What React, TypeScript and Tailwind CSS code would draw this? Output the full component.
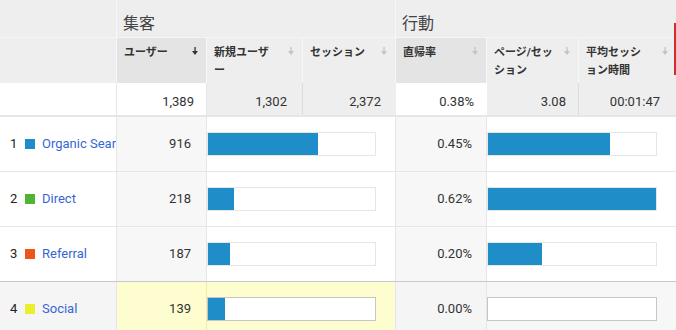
import React from 'react';

const cols = 'grid grid-cols-[117px_90px_96px_93px_91px_92px_97px]';

type Row = {
  rank: number;
  name: string;
  swatch: string;
  users: number;
  bounce: string;
  bounceVal: number;
};

const rows: Row[] = [
  { rank: 1, name: 'Organic Search', swatch: 'bg-[#1f8ec8]', users: 916, bounce: '0.45%', bounceVal: 0.45 },
  { rank: 2, name: 'Direct', swatch: 'bg-[#50b432]', users: 218, bounce: '0.62%', bounceVal: 0.62 },
  { rank: 3, name: 'Referral', swatch: 'bg-[#ed561b]', users: 187, bounce: '0.20%', bounceVal: 0.2 },
  { rank: 4, name: 'Social', swatch: 'bg-[#e9ef2e]', users: 139, bounce: '0.00%', bounceVal: 0 },
];

const TOTAL_USERS = 1389;
const MAX_BOUNCE = 0.62;

function SortArrow({ active }: { active?: boolean }) {
  return (
    <svg
      width="6"
      height="8"
      viewBox="0 0 6 8"
      className={`absolute right-[8px] top-[9px] ${active ? 'text-[#333]' : 'text-[#c4c4c4]'}`}
    >
      <rect x="2.4" y="0" width="1.3" height="5" fill="currentColor" />
      <polygon points="0,4 6,4 3,8" fill="currentColor" />
    </svg>
  );
}

function HeaderCell({ label, sorted, active, last }: { label: string; sorted?: boolean; active?: boolean; last?: boolean }) {
  return (
    <div
      className={`relative h-[45px] pl-[7px] pt-[6px] ${sorted ? 'bg-[#e4e4e4]' : 'bg-[#eeeeee]'} ${last ? '' : 'border-r border-[#f7f7f7]'}`}
    >
      <div className="w-[62px] text-[11px] font-bold leading-[18px] text-[#333]">{label}</div>
      <SortArrow active={active} />
    </div>
  );
}

function Bar({ pct, width, highlight }: { pct: number; width: string; highlight?: boolean }) {
  return (
    <div className={`${width} h-[24px] bg-white border ${highlight ? 'border-[#c6c6c6]' : 'border-[#e6e6e6]'}`}>
      <div className="h-full bg-[#1f8ec8]" style={{ width: `${pct * 100}%` }} />
    </div>
  );
}

export default function App() {
  return (
    <div className="relative h-[330px] w-[676px] overflow-hidden bg-white font-['Roboto','Noto_Sans_CJK_JP',sans-serif] text-[#333]">
      {/* group header */}
      <div className={`${cols} h-[38px] bg-[#eeeeee] border-b border-[#f5f5f5]`}>
        <div className="border-r border-[#f7f7f7]" />
        <div className="col-span-3 flex items-end pb-[5px] pl-[6px] text-[16px] leading-none text-[#444] border-r border-[#f7f7f7]">集客</div>
        <div className="col-span-3 flex items-end pb-[5px] pl-[6px] text-[16px] leading-none text-[#444]">行動</div>
      </div>

      {/* column header */}
      <div className={`${cols}`}>
        <div className="h-[45px] bg-[#eeeeee] border-r border-[#f7f7f7]" />
        <HeaderCell label="ユーザー" sorted active />
        <HeaderCell label="新規ユーザー" />
        <HeaderCell label="セッション" />
        <HeaderCell label="直帰率" sorted />
        <HeaderCell label="ページ/セッション" />
        <HeaderCell label="平均セッション時間" last />
      </div>

      {/* totals */}
      <div className={`${cols} h-[33px] text-[13px] border-b border-[#e6e6e6]`}>
        <div className="bg-white border-r border-[#e6e6e6]" />
        <div className="bg-white flex items-end justify-end pb-[4px] pr-[12px] border-r border-[#e6e6e6]">1,389</div>
        <div className="bg-[#eeeeee] flex items-end justify-end pb-[4px] pr-[15px] border-r border-[#dcdcdc]">1,302</div>
        <div className="bg-[#eeeeee] flex items-end justify-end pb-[4px] pr-[15px]">2,372</div>
        <div className="bg-white flex items-end justify-end pb-[4px] pr-[13px]">0.38%</div>
        <div className="bg-[#eeeeee] flex items-end justify-end pb-[4px] pr-[12px] border-r border-[#dcdcdc]">3.08</div>
        <div className="bg-[#eeeeee] flex items-end justify-end pb-[4px] pr-[16px]">00:01:47</div>
      </div>

      {/* rows */}
      {rows.map((r) => {
        const hl = r.rank === 4;
        return (
          <div
            key={r.rank}
            className={`${cols} h-[55px] text-[13px] border-t ${hl ? 'border-[#c8c8c8]' : 'border-[#e6e6e6]'}`}
          >
            <div className={`flex items-center overflow-hidden whitespace-nowrap pl-[10px] border-r border-[#e6e6e6] ${hl ? 'bg-[#f5f5f5]' : 'bg-white'}`}>
              <span className="w-[15px] shrink-0 text-[#222]">{r.rank}</span>
              <span className={`h-[10px] w-[10px] shrink-0 ${r.swatch}`} />
              <span className="ml-[7px] shrink-0 text-[#3767d2]">{r.name}</span>
            </div>
            <div className={`flex items-center justify-end pr-[15px] border-r ${hl ? 'bg-[#fdfdd0] border-[#f3eaa8]' : 'bg-[#f7f7f7] border-[#e6e6e6]'}`}>
              {r.users}
            </div>
            <div className={`col-span-2 flex items-center border-r border-[#e6e6e6] ${hl ? 'bg-[#fdfdd0]' : 'bg-white'}`}>
              <Bar pct={r.users / TOTAL_USERS} width="w-[169px]" highlight={hl} />
            </div>
            <div className={`flex items-center justify-end pr-[14px] border-r border-[#e6e6e6] ${hl ? 'bg-[#f5f5f5]' : 'bg-[#f7f7f7]'}`}>
              {r.bounce}
            </div>
            <div className={`col-span-2 flex items-center ${hl ? 'bg-[#f7f7f7]' : 'bg-white'}`}>
              <Bar pct={r.bounceVal / MAX_BOUNCE} width="w-[170px]" highlight={hl} />
            </div>
          </div>
        );
      })}

      <div className="absolute right-0 top-[23px] h-[52px] w-[2px] bg-[#c9302c]" />
    </div>
  );
}
